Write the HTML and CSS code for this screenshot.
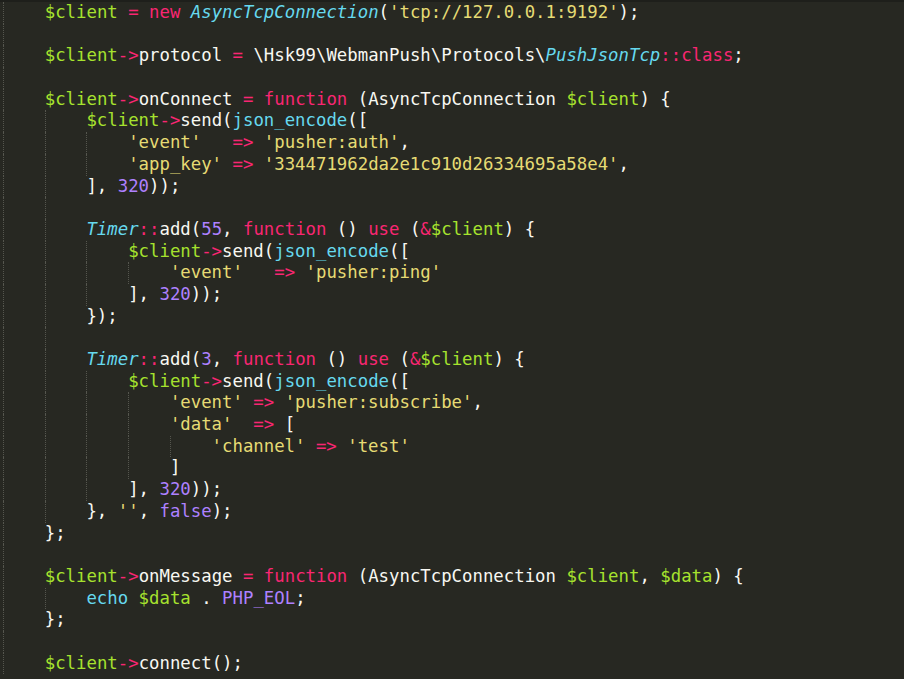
FILE: index.html
```html
<!DOCTYPE html>
<html lang="en">
<head>
  <meta charset="UTF-8">
  <title>client.php</title>
  <link rel="stylesheet" href="styles.css">
</head>
<body>
  <div class="editor">
    <div class="line"><i class="ind"></i><span class="v">$client</span> <span class="k">=</span> <span class="k">new</span> <span class="t">AsyncTcpConnection</span>(<span class="s">'tcp://127.0.0.1:9192'</span>);</div>
    <div class="line"><i class="ind"></i></div>
    <div class="line"><i class="ind"></i><span class="v">$client</span><span class="k">-&gt;</span>protocol <span class="k">=</span> \Hsk99\WebmanPush\Protocols\<span class="t">PushJsonTcp</span><span class="k">::class</span>;</div>
    <div class="line"><i class="ind"></i></div>
    <div class="line"><i class="ind"></i><span class="v">$client</span><span class="k">-&gt;</span>onConnect <span class="k">=</span> <span class="k">function</span> (AsyncTcpConnection <span class="v">$client</span>) {</div>
    <div class="line"><i class="ind"></i><i class="ind"></i><span class="v">$client</span><span class="k">-&gt;</span>send(<span class="f">json_encode</span>([</div>
    <div class="line"><i class="ind"></i><i class="ind"></i><i class="ind"></i><span class="s">'event'</span>   <span class="k">=&gt;</span> <span class="s">'pusher:auth'</span>,</div>
    <div class="line"><i class="ind"></i><i class="ind"></i><i class="ind"></i><span class="s">'app_key'</span> <span class="k">=&gt;</span> <span class="s">'334471962da2e1c910d26334695a58e4'</span>,</div>
    <div class="line"><i class="ind"></i><i class="ind"></i>], <span class="n">320</span>));</div>
    <div class="line"><i class="ind"></i><i class="ind"></i></div>
    <div class="line"><i class="ind"></i><i class="ind"></i><span class="t">Timer</span><span class="k">::</span>add(<span class="n">55</span>, <span class="k">function</span> () <span class="k">use</span> (<span class="k">&amp;</span><span class="v">$client</span>) {</div>
    <div class="line"><i class="ind"></i><i class="ind"></i><i class="ind"></i><span class="v">$client</span><span class="k">-&gt;</span>send(<span class="f">json_encode</span>([</div>
    <div class="line"><i class="ind"></i><i class="ind"></i><i class="ind"></i><i class="ind"></i><span class="s">'event'</span>   <span class="k">=&gt;</span> <span class="s">'pusher:ping'</span></div>
    <div class="line"><i class="ind"></i><i class="ind"></i><i class="ind"></i>], <span class="n">320</span>));</div>
    <div class="line"><i class="ind"></i><i class="ind"></i>});</div>
    <div class="line"><i class="ind"></i><i class="ind"></i></div>
    <div class="line"><i class="ind"></i><i class="ind"></i><span class="t">Timer</span><span class="k">::</span>add(<span class="n">3</span>, <span class="k">function</span> () <span class="k">use</span> (<span class="k">&amp;</span><span class="v">$client</span>) {</div>
    <div class="line"><i class="ind"></i><i class="ind"></i><i class="ind"></i><span class="v">$client</span><span class="k">-&gt;</span>send(<span class="f">json_encode</span>([</div>
    <div class="line"><i class="ind"></i><i class="ind"></i><i class="ind"></i><i class="ind"></i><span class="s">'event'</span> <span class="k">=&gt;</span> <span class="s">'pusher:subscribe'</span>,</div>
    <div class="line"><i class="ind"></i><i class="ind"></i><i class="ind"></i><i class="ind"></i><span class="s">'data'</span>  <span class="k">=&gt;</span> [</div>
    <div class="line"><i class="ind"></i><i class="ind"></i><i class="ind"></i><i class="ind"></i><i class="ind"></i><span class="s">'channel'</span> <span class="k">=&gt;</span> <span class="s">'test'</span></div>
    <div class="line"><i class="ind"></i><i class="ind"></i><i class="ind"></i><i class="ind"></i>]</div>
    <div class="line"><i class="ind"></i><i class="ind"></i><i class="ind"></i>], <span class="n">320</span>));</div>
    <div class="line"><i class="ind"></i><i class="ind"></i>}, <span class="s">''</span>, <span class="n">false</span>);</div>
    <div class="line"><i class="ind"></i>};</div>
    <div class="line"><i class="ind"></i></div>
    <div class="line"><i class="ind"></i><span class="v">$client</span><span class="k">-&gt;</span>onMessage <span class="k">=</span> <span class="k">function</span> (AsyncTcpConnection <span class="v">$client</span>, <span class="v">$data</span>) {</div>
    <div class="line"><i class="ind"></i><i class="ind"></i><span class="f">echo</span> <span class="v">$data</span> . <span class="n">PHP_EOL</span>;</div>
    <div class="line"><i class="ind"></i>};</div>
    <div class="line"><i class="ind"></i></div>
    <div class="line"><i class="ind"></i><span class="v">$client</span><span class="k">-&gt;</span>connect();</div>
  </div>
</body>
</html>
```
FILE: styles.css
```css
html, body {
  margin: 0;
  height: 100%;
  overflow: hidden;
  background-color: #272822;
}
.editor {
  border-top: 2px solid #1e1f1b;
  padding: 0 0 0 3px;
  font-family: "DejaVu Sans Mono", monospace;
  font-size: 17.33px;
  color: #f8f8f2;
}
.line {
  height: 21.7px;
  line-height: 21.7px;
  white-space: pre;
}
.ind {
  display: inline-block;
  box-sizing: border-box;
  width: 4ch;
  height: 21.7px;
  vertical-align: top;
  border-left: 1px dotted #55564e;
}
.v { color: #a6e22e; }
.k { color: #f92672; }
.t { color: #66d9ef; font-style: italic; }
.f { color: #66d9ef; }
.s { color: #e6db74; }
.n { color: #ae81ff; }
```
